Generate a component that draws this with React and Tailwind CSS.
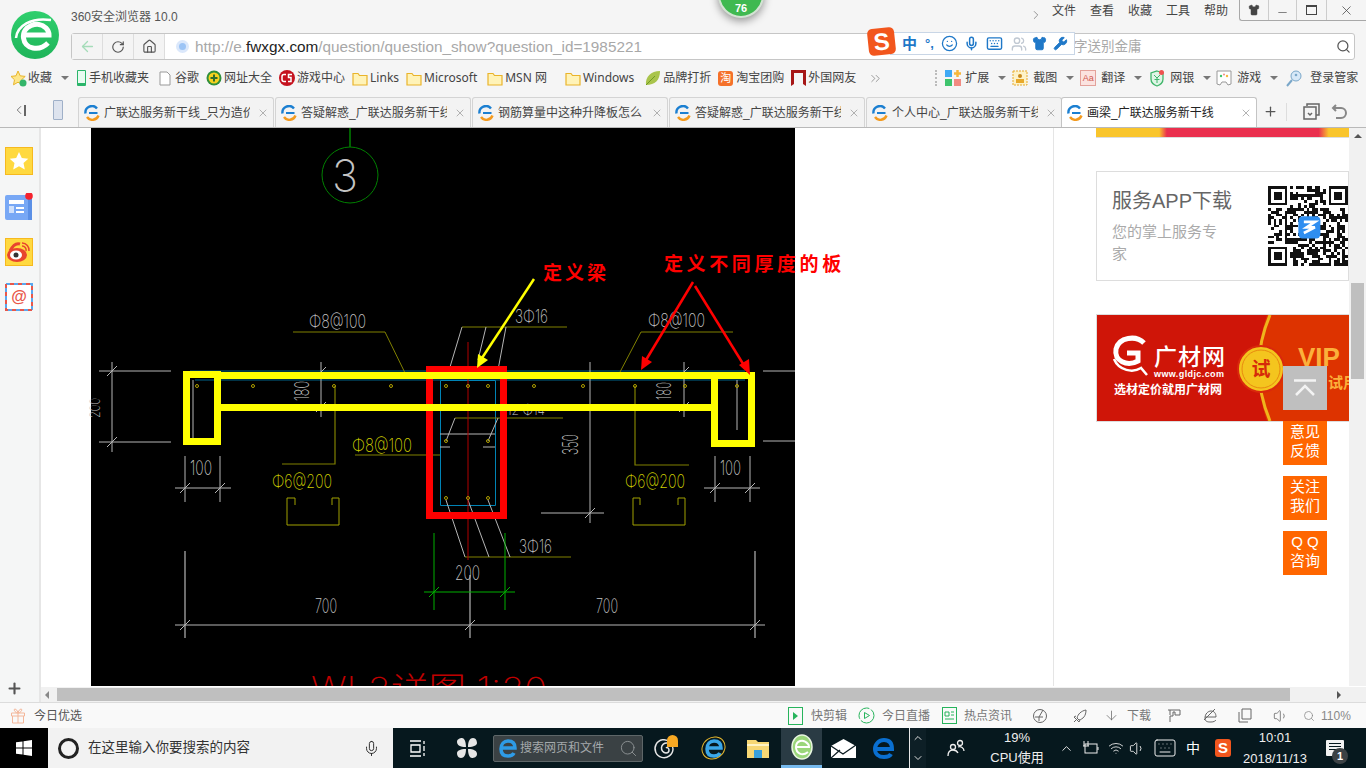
import {
  ArrowLeft, RotateCw, Home, Search, Shirt, Minus, X, ChevronRight, ChevronsRight, Plus, ChevronUp, ChevronDown,
  ArrowDown, Volume1, Wifi, Mic, Keyboard, Smile, Wrench, Users, ChevronLeft,
} from "lucide-react";

const uiFont = "font-['Liberation_Sans','Noto_Sans_CJK_SC',sans-serif]";

const tabs = [
  "广联达服务新干线_只为造价",
  "答疑解惑_广联达服务新干线",
  "钢筋算量中这种升降板怎么",
  "答疑解惑_广联达服务新干线",
  "个人中心_广联达服务新干线",
];

const menus = ["文件", "查看", "收藏", "工具", "帮助"];

function Caret({ className = "" }) {
  return <span className={`w-0 h-0 border-x-[4px] border-x-transparent border-t-[4px] border-t-[#777] ${className}`} />;
}

function FolderIcon() {
  return (
    <svg width="16" height="15" viewBox="0 0 16 15" className="shrink-0">
      <path d="M1 2.5h5l1.5 2H15v9.500H1z" fill="#fff3b8" stroke="#eab42a" strokeWidth="1.200" />
    </svg>
  );
}

function TabFavicon() {
  return (
    <svg width="16" height="16" viewBox="0 0 16 16" className="shrink-0">
      <path d="M1.500 8.500A6.500 6.500 0 0 1 13 3.500" fill="none" stroke="#1b7fd1" strokeWidth="2.400" />
      <path d="M5 8h8.500" stroke="#1b7fd1" strokeWidth="2" />
      <path d="M14.500 10.500A6.500 6.500 0 0 1 3 12" fill="none" stroke="#f39a1e" strokeWidth="2.400" />
    </svg>
  );
}

function Tab({ title, active }) {
  return (
    <div className={`w-[196px] h-[30px] shrink-0 flex items-center pl-[5px] pr-[4px] rounded-t-[3px] border border-b-0 ${active ? "bg-white border-[#c4c4c4]" : "bg-[#f3f3f3] border-[#d4d4d4]"}`}>
      <TabFavicon />
      <span className={`ml-[4px] w-[146px] overflow-hidden whitespace-nowrap text-[12px] ${active ? "text-[#222]" : "text-[#444]"}`}>{title}</span>
      <X size={12} strokeWidth={1.500} className="ml-auto text-[#999]" />
    </div>
  );
}

function Logo360() {
  return (
    <svg width="48" height="48" viewBox="0 0 48 48" className="absolute left-[11px] top-[11px]">
      <defs>
        <linearGradient id="lg360" x1="0" y1="0" x2="0" y2="1">
          <stop offset="0" stopColor="#2fcf6d" />
          <stop offset="1" stopColor="#1fb45a" />
        </linearGradient>
      </defs>
      <circle cx="24" cy="24" r="24" fill="url(#lg360)" />
      <path d="M5 27C6 15 20 6 40 9" fill="none" stroke="#fff" strokeWidth="2.500" />
      <path d="M37 32C28 41 14 38 12.500 27C11 15 27 9 35 17C37 19 38 21 38 24H13" fill="none" stroke="#fff" strokeWidth="5" />
    </svg>
  );
}

function TopBar() {
  return (
    <div className="h-[128px] shrink-0 bg-[#f5f5f5] border-b border-[#b9b9b9] flex flex-col relative">
      <Logo360 />
      <div className="h-[33px] flex">
        <div className="w-[71px] shrink-0" />
        <span className="mt-[10px] text-[12px] leading-[14px] text-[#555]">360安全浏览器 10.0</span>
        <div className="ml-auto flex items-start">
          <ChevronRight size={14} strokeWidth={1.300} className="mt-[8px] mr-[9px] text-[#777]" />
          <div className="flex gap-[14px] mt-[3px] mr-[11px] text-[12px] leading-[16px] text-[#444]">
            {menus.map((m) => <span key={m}>{m}</span>)}
          </div>
          <div className="w-[127px] h-[21px] flex items-center border-l border-b border-[#a8a8a8] rounded-bl-[3px] text-[#444]">
            <div className="w-[29px] flex justify-center border-r border-[#ccc] h-full items-center"><Shirt size={12} fill="#444" strokeWidth={1} /></div>
            <div className="w-[28px] flex justify-center border-r border-[#ccc] h-full items-center"><Minus size={13} strokeWidth={1.200} className="mt-[5px]" /></div>
            <div className="w-[30px] flex justify-center border-r border-[#ccc] h-full items-center">
              <span className="w-[11px] h-[10px] border border-[#444] border-t-[2px]" />
            </div>
            <div className="flex-1 flex justify-center"><X size={15} strokeWidth={1.200} /></div>
          </div>
        </div>
      </div>

      <div className="h-[27px] ml-[71px] mr-[11px] flex items-stretch bg-white border border-[#c6c6c6] rounded-[3px]">
        <div className="w-[31px] flex items-center justify-center bg-[#f4f4f4] border-r border-[#ddd]"><ArrowLeft size={17} strokeWidth={1.800} className="text-[#a5dcb9]" /></div>
        <div className="w-[31px] flex items-center justify-center bg-[#f4f4f4] border-r border-[#ddd]"><RotateCw size={14} strokeWidth={2} className="text-[#555]" /></div>
        <div className="w-[31px] flex items-center justify-center bg-[#f4f4f4] border-r border-[#ddd]"><Home size={15} strokeWidth={1.800} className="text-[#555]" /></div>
        <span className="ml-[11px] mt-[6px] w-[13px] h-[13px] rounded-full bg-[#9cc4f5] border-[3px] border-[#dbe8fb]" />
        <span className="ml-[6px] w-[880px] text-[15.300px] leading-[25px] text-[#a8a8a8] whitespace-nowrap">
          http://e.<span className="text-[#222]">fwxgx.com</span>/question/question_show?question_id=1985221
        </span>
        <span className="ml-[-1px] text-[13.500px] leading-[25px] text-[#aaa] whitespace-nowrap">字送别金庸</span>
        <Search size={15} strokeWidth={2} className="ml-auto mr-[3px] mt-[5px] text-[#555]" />
      </div>

      <div className="h-[37px] flex items-center pb-[1px] pl-[10px] text-[12px] text-[#444] whitespace-nowrap">
        <svg width="17" height="17" viewBox="0 0 17 17">
          <path d="M8 1l2.200 4.800 5 .6-3.700 3.400 1 5-4.500-2.600-4.500 2.600 1-5L1 6.400l5-.6z" fill="#fde68a" stroke="#e9b52a" />
          <circle cx="13" cy="13" r="3.500" fill="#34b56a" />
        </svg>
        <span className="ml-[1px]">收藏</span>
        <Caret className="ml-[9px]" />
        <span className="ml-[8px] w-[9px] h-[16px] border border-[#2ab56a] rounded-[1px] bg-[#e8fbf0] border-b-[3px]" />
        <span className="ml-[3px]">手机收藏夹</span>
        <svg width="12" height="15" viewBox="0 0 12 15" className="ml-[10px]"><path d="M1 1h7l3 3v10H1z" fill="#fff" stroke="#999" /></svg>
        <span className="ml-[4px]">谷歌</span>
        <svg width="16" height="16" viewBox="0 0 16 16" className="ml-[7px]">
          <circle cx="8" cy="8" r="7.500" fill="#2f8f3c" /><circle cx="8" cy="8" r="5.500" fill="#f7d21e" />
          <path d="M8 4.500v7M4.500 8h7" stroke="#2f6f2c" strokeWidth="2" />
        </svg>
        <span className="ml-[2px]">网址大全</span>
        <svg width="16" height="16" viewBox="0 0 16 16" className="ml-[7px]">
          <circle cx="8" cy="8" r="8" fill="#c5121e" />
          <path d="M7 4.500H5A2 2 0 0 0 3 6.500v3a2 2 0 0 0 2 2h2M13 4.500H9.500v3H12v4H9" fill="none" stroke="#fff" strokeWidth="1.500" />
        </svg>
        <span className="ml-[2px]">游戏中心</span>
        <span className="ml-[7px]"><FolderIcon /></span>
        <span className="ml-[2px] font-['Noto_Sans',sans-serif]">Links</span>
        <span className="ml-[7px]"><FolderIcon /></span>
        <span className="ml-[2px] font-['Noto_Sans',sans-serif]">Microsoft</span>
        <span className="ml-[10px]"><FolderIcon /></span>
        <span className="ml-[2px] font-['Noto_Sans','Noto_Sans_CJK_SC',sans-serif]">MSN 网</span>
        <span className="ml-[18px]"><FolderIcon /></span>
        <span className="ml-[2px] font-['Noto_Sans',sans-serif]">Windows</span>
        <svg width="16" height="16" viewBox="0 0 16 16" className="ml-[11px]"><path d="M1 15C0 7 6 1 15 1c0 9-5 14-14 14z" fill="#a9c44c" /><path d="M1 15L10 6" stroke="#6f9a22" /></svg>
        <span className="ml-[2px]">品牌打折</span>
        <span className="ml-[7px] w-[15px] h-[15px] rounded-[3px] bg-[#f5712a] text-white text-[11px] leading-[15px] text-center">淘</span>
        <span className="ml-[3px]">淘宝团购</span>
        <svg width="15" height="16" viewBox="0 0 15 16" className="ml-[7px]"><path d="M0 0h15v16l-3-2V3H3v11l-3 2z" fill="#a61616" /></svg>
        <span className="ml-[2px]">外国网友</span>
        <ChevronsRight size={15} strokeWidth={1} className="ml-[12px] text-[#666]" />
        <span className="ml-[52px] w-[2px] h-[16px] border-l-2 border-dotted border-[#bbb]" />
        <svg width="16" height="16" viewBox="0 0 16 16" className="ml-[8px]">
          <rect x="0" y="0" width="7" height="7" fill="#3fa9f5" /><rect x="0" y="9" width="7" height="7" fill="#3ec46d" />
          <rect x="9" y="9" width="7" height="7" fill="#f28b82" /><path d="M12.500 0v7M9 3.500h7" stroke="#f6b73c" strokeWidth="2.500" />
        </svg>
        <span className="ml-[4px]">扩展</span>
        <Caret className="ml-[9px]" />
        <svg width="16" height="16" viewBox="0 0 16 16" className="ml-[6px]">
          <rect x="1" y="1" width="14" height="14" fill="#fdf2c8" stroke="#e8a92a" strokeDasharray="2 1" />
          <circle cx="8" cy="6" r="2" fill="#c98a1d" /><rect x="4" y="9" width="8" height="4" fill="#e8a92a" />
        </svg>
        <span className="ml-[5px]">截图</span>
        <Caret className="ml-[9px]" />
        <span className="ml-[6px] w-[16px] h-[16px] bg-[#fbe3e0] border border-[#e3a29b] text-[#d05a50] text-[9px] leading-[14px] text-center">Aa</span>
        <span className="ml-[5px]">翻译</span>
        <Caret className="ml-[9px]" />
        <svg width="16" height="18" viewBox="0 0 16 18" className="ml-[7px]">
          <path d="M8 2l6 2v6c0 4-3 6-6 7-3-1-6-3-6-7V4z" fill="#dff5e6" stroke="#3fb56a" strokeWidth="1.300" />
          <path d="M5 6l3 3 3-3M8 9v5M5.500 10.500h5" stroke="#3fb56a" fill="none" />
          <circle cx="12.500" cy="3.500" r="2.500" fill="#ef5350" />
        </svg>
        <span className="ml-[5px]">网银</span>
        <Caret className="ml-[9px]" />
        <svg width="16" height="16" viewBox="0 0 16 16" className="ml-[5px]">
          <path d="M1 1h14v13l-3 1-2-3H6l-2 3-3-1z" fill="#fff" stroke="#999" />
          <circle cx="5" cy="6" r="1.200" fill="#3ec46d" /><circle cx="8" cy="4.500" r="1" fill="#f28b82" /><circle cx="11" cy="6" r="1.200" fill="#f6b73c" />
        </svg>
        <span className="ml-[5px]">游戏</span>
        <Caret className="ml-[9px]" />
        <svg width="16" height="17" viewBox="0 0 16 17" className="ml-[8px]">
          <circle cx="10" cy="6" r="5" fill="#d7e8f7" stroke="#7aa7c9" /><circle cx="10" cy="5" r="1.300" fill="#7aa7c9" />
          <path d="M6 10l-5 6" stroke="#7aa7c9" strokeWidth="2" />
        </svg>
        <span className="ml-[8px]">登录管家</span>
      </div>

      <div className="h-[30px] flex items-end text-[#666]">
        <div className="w-[41px] h-[30px] flex items-center pl-[12px] pb-[4px]">
          <ChevronLeft size={14} strokeWidth={1.500} />
          <span className="w-[2px] h-[11px] bg-[#666] -ml-[2px]" />
        </div>
        <div className="w-[37px] h-[30px] flex items-center">
          <span className="ml-[12px] w-[10px] h-[20px] bg-[#dde3ee] border border-[#9fb0c8] rounded-[1px] mb-[4px]" />
        </div>
        <div className="flex gap-[1px]">
          {tabs.map((t, i) => <Tab key={i} title={t} />)}
          <div className="-ml-[2px]"><Tab title="画梁_广联达服务新干线" active /></div>
        </div>
        <Plus size={15} strokeWidth={2} className="ml-[6px] mb-[8px] text-[#555]" />
        <span className="ml-[8px] mb-[6px] w-[1px] h-[18px] bg-[#ddd]" />
        <svg width="18" height="17" viewBox="0 0 18 17" className="ml-[16px] mb-[7px]" fill="none" stroke="#666" strokeWidth="1.500">
          <path d="M4 3V1h12v11h-3M1 4h12v12H1z" />
          <path d="M5 10l2 2 2-2" />
        </svg>
        <svg width="16" height="16" viewBox="0 0 16 16" className="ml-[10px] mb-[7px]" fill="none" stroke="#888" strokeWidth="2">
          <path d="M2 4h8a5 5 0 0 1 0 10H5M5 1L2 4l3 3" />
        </svg>
      </div>

      {/* update badge */}
      <div className="absolute left-[718px] top-[-28px] w-[46px] h-[46px] rounded-full bg-[#3fb950] border-2 border-[#d3e3d3] shadow-[0_3px_8px_rgba(0,0,0,0.4)] flex items-end justify-center">
        <span className="text-[11px] leading-[16px] font-bold text-white">76</span>
      </div>

      {/* input method toolbar */}
      <div className="absolute left-[890px] top-[32px] w-[185px] h-[23px] bg-white border border-[#c9d6e6] flex items-center text-[#1f78c8]">
        <span className="ml-[11px] text-[15px] leading-none font-bold">中</span>
        <span className="ml-[8px] text-[13px] leading-none font-bold">°,</span>
        <Smile size={17} strokeWidth={1.800} className="ml-[7px]" />
        <Mic size={15} strokeWidth={2.400} className="ml-[6px]" />
        <Keyboard size={17} strokeWidth={2} className="ml-[7px]" />
        <Users size={16} strokeWidth={2} className="ml-[8px] text-[#c0c8d2]" />
        <Shirt size={15} fill="#1f78c8" strokeWidth={1.500} className="ml-[5px]" />
        <Wrench size={15} fill="#1f78c8" strokeWidth={1.500} className="ml-[6px]" />
      </div>
      <div className="absolute left-[868px] top-[28px] w-[27px] h-[27px] rounded-[5px] bg-[#f2561d] rotate-[-6deg] flex items-center justify-center">
        <span className="text-white text-[24px] leading-none font-bold font-['Liberation_Sans',sans-serif]">S</span>
      </div>
    </div>
  );
}

function Sidebar() {
  return (
    <div className="w-[41px] shrink-0 h-full bg-[#f5f6f6] border-r-2 border-[#e6e6e6] flex flex-col items-start pl-[5px]">
      <div className="mt-[19px] w-[28px] h-[28px] bg-[#ffd940] border border-[#f6b91f] flex items-center justify-center">
        <svg width="20" height="20" viewBox="0 0 20 20"><path d="M10 1l2.800 6 6.500.7-4.800 4.400 1.300 6.400L10 15.300 4.200 18.500l1.300-6.400L.7 7.700 7.200 7z" fill="#fff" /></svg>
      </div>
      <svg width="28" height="27" viewBox="0 0 28 27" className="mt-[18px]">
        <rect x="0" y="2" width="27" height="25" rx="2" fill="#78a8f5" />
        <rect x="23" y="5" width="4" height="22" fill="#5b90e6" />
        <rect x="4" y="7" width="15" height="4" fill="#fff" /><rect x="4" y="13" width="5" height="7" fill="#cfe0fb" />
        <rect x="11" y="14" width="8" height="2" fill="#fff" /><rect x="11" y="18" width="8" height="2" fill="#fff" />
        <circle cx="24" cy="3" r="3.800" fill="#f5222d" />
      </svg>
      <div className="mt-[18px] w-[28px] h-[28px] bg-[#ffd940] border border-[#f6b91f] flex items-center justify-center">
        <svg width="24" height="22" viewBox="0 0 24 22">
          <ellipse cx="10" cy="14" rx="10" ry="7" fill="#e8442e" />
          <path d="M3 10c3-6 7-8 10-7" stroke="#e8442e" strokeWidth="3" fill="none" />
          <ellipse cx="9" cy="14" rx="6" ry="4.500" fill="#fff" /><circle cx="9" cy="14" r="2.500" fill="#333" />
          <path d="M15 2a7 7 0 0 1 7 8M15 5a4 4 0 0 1 4 5" stroke="#e8442e" strokeWidth="1.500" fill="none" />
        </svg>
      </div>
      <div className="mt-[17px] w-[28px] h-[28px] relative flex items-center justify-center text-[16px] font-bold text-[#e8574a] leading-none font-['Liberation_Sans',sans-serif]">
        <svg width="28" height="28" viewBox="0 0 28 28" className="absolute inset-0">
          <rect x="1" y="1" width="26" height="26" fill="#fff" stroke="#5aa7ee" strokeWidth="2" strokeDasharray="4 4" />
          <rect x="1" y="1" width="26" height="26" fill="none" stroke="#e8574a" strokeWidth="2" strokeDasharray="4 4" strokeDashoffset="4" />
        </svg>
        <span className="relative">@</span>
      </div>
      <Plus size={17} strokeWidth={3} className="mt-auto mb-[5px] ml-[1px] text-[#555]" />
    </div>
  );
}

function CadText({ x, y, w, size = 20, fill = "#c4c4c4", rotate, children }) {
  return (
    <text
      x={x}
      y={y}
      fontSize={size}
      fontWeight="200"
      fill={fill}
      textLength={w}
      lengthAdjust="spacingAndGlyphs"
      fontFamily="Inter, Roboto, Noto Sans CJK SC, sans-serif"
      transform={rotate ? `rotate(-90 ${x} ${y})` : undefined}
    >
      {children}
    </text>
  );
}

const rebarDots = [
  [197, 386], [253, 386], [334, 386], [391, 386], [446, 386], [468, 386], [488, 386], [534, 386], [583, 386], [635, 386], [685, 386], [737, 386],
  [446, 441], [488, 441], [446, 498], [468, 498], [488, 498],
];

const ticks = [
  [185, 488], [220, 488], [715, 488], [750, 488], [185, 625], [470, 625], [755, 625], [112, 371], [112, 442], [321, 372], [321, 407], [684, 372], [684, 407], [590, 513],
];

// section drawing, in page coordinates
function CadDrawing() {
  const gray = "#b5b5b5";
  const olive = "#808000";
  return (
    <svg width="704" height="558" viewBox="91 128 704 558" className="block shrink-0 bg-black overflow-visible">
      <path d="M350 128v19" stroke="#008000" strokeWidth="1.500" />
      <circle cx="350" cy="175" r="28" fill="none" stroke="#008000" />
      <CadText x={332} y={192} w={26} size={45}>3</CadText>

      {/* slab + column outlines */}
      <path d="M190 371H745M195 380H745" stroke="#00648c" />
      <path d="M440.500 380.500H495.500V505.500H440.500Z" fill="none" stroke="#0083b5" />
      <path d="M193 380v60M737 380v50" stroke={gray} />

      {/* leaders */}
      <path d="M293 332H385L408 379M733 332H641L620 372M462 327H567M465 557H571M355 455H440M455 418H563" stroke={olive} fill="none" />
      <path d="M335 386V464H282M635 386V465H689" stroke={olive} fill="none" strokeWidth="1.200" />
      <path d="M295 505V498H287V525H339V498H332V505M640 505V498H633V525H685V498H678V505" stroke="#a0a000" fill="none" />
      <path d="M462 327L450 367M486 327L478 360M506 327L498 370M455 418L446 441M498 418L488 441M446 500L465 557M468 500L489 557M488 500L510 557" stroke={gray} fill="none" />
      <path d="M440 434H495M440 447H450M483 447H495" stroke={gray} />
      <path d="M468 342V560" stroke="#b00000" />

      {/* dimensions */}
      <path d="M99 371H171M99 442H171M112 362V452M321 362V417M684 362V417M590 362V523M541 513H604" stroke={gray} />
      <path d="M185 456V502M220 456V502M175 488H231M715 456V502M750 456V502M704 488H760M763 371H795M763 441H795" stroke={gray} />
      <path d="M185 551V638M755 551V638M470 575V638M175 625H765" stroke={gray} strokeWidth="1.200" />
      {ticks.map(([x, y]) => <path key={`${x}-${y}`} d={`M${x - 5} ${y + 5}L${x + 5} ${y - 5}`} stroke={gray} />)}
      <path d="M434 533V610M505 533V610M424 592H515M429 597L439 587M500 597L510 587" stroke="#00b000" />

      {rebarDots.map(([x, y]) => <circle key={`${x}-${y}`} cx={x} cy={y} r="1.500" fill="none" stroke="#b0a000" />)}

      <CadText x={309} y={328} w={57} size={19} >Φ8@100</CadText>
      <CadText x={648} y={327} w={57} size={19} >Φ8@100</CadText>
      <CadText x={515} y={323} w={33} size={19} >3Φ16</CadText>
      <CadText x={519} y={553} w={33} size={19} >3Φ16</CadText>
      <CadText x={507} y={415} w={38} size={15} >12 Φ14</CadText>
      <CadText x={352} y={452} w={60} size={19} fill="#d0d000">Φ8@100</CadText>
      <CadText x={272} y={488} w={60} size={19} fill="#d0d000">Φ6@200</CadText>
      <CadText x={625} y={488} w={60} size={19} fill="#d0d000">Φ6@200</CadText>
      <CadText x={190} y={475} w={22} size={20}>100</CadText>
      <CadText x={720} y={475} w={21} size={20}>100</CadText>
      <CadText x={455} y={580} w={25} size={20}>200</CadText>
      <CadText x={315} y={613} w={22} size={20}>700</CadText>
      <CadText x={596} y={613} w={22} size={20}>700</CadText>
      <CadText x={309} y={401} w={20} size={20} rotate>180</CadText>
      <CadText x={671} y={400} w={18} size={20} rotate>180</CadText>
      <CadText x={578} y={455} w={21} size={22} rotate>350</CadText>
      <CadText x={100} y={418} w={20} size={14} rotate>200</CadText>
      <CadText x={311} y={700} w={236} size={32} fill="#c00000">WL2详图 1:20</CadText>

      {/* hand annotations */}
      <path d="M429.500 369.500H503.500V515.500H429.500Z" fill="none" stroke="#ff0000" strokeWidth="7" />
      <path d="M186.500 374.500H217.500V441.500H186.500Z" fill="none" stroke="#ffff00" strokeWidth="7" />
      <path d="M714.500 375.500H751.500V443.500H714.500Z" fill="none" stroke="#ffff00" strokeWidth="7" />
      <path d="M221 375.500H711M221 407.500H711" stroke="#ffff00" strokeWidth="7" />

      <path d="M534 279L482 358" stroke="#ffff00" strokeWidth="2.500" />
      <path d="M477 368L478 354L488 360Z" fill="#ffff00" />
      <path d="M693 282L646 360" stroke="#ff0000" strokeWidth="2.500" />
      <path d="M641 370L642 356L652 362Z" fill="#ff0000" />
      <path d="M695 286L745 367" stroke="#ff0000" strokeWidth="2.500" />
      <path d="M750 375L739 365L749 359Z" fill="#ff0000" />

      <text x="543" y="280" fontSize="19" fontWeight="700" letterSpacing="3" fill="#ff0000" fontFamily="Noto Sans CJK SC, sans-serif">定义梁</text>
      <text x="664" y="271" fontSize="19" fontWeight="700" letterSpacing="3.600" fill="#ff0000" fontFamily="Noto Sans CJK SC, sans-serif">定义不同厚度的板</text>
    </svg>
  );
}

// qr matrix, seeded so it stays the same on every render
const qrCells = (() => {
  const size = 29;
  const cells = [];
  let seed = 7919;
  const inFinder = (x, y) => (x < 8 && y < 8) || (x >= size - 8 && y < 8) || (x < 8 && y >= size - 8);
  for (let y = 0; y < size; y++) {
    for (let x = 0; x < size; x++) {
      seed = (seed * 1103515245 + 12345) & 0x7fffffff;
      if (!inFinder(x, y) && (seed >> 16) % 100 < 52) cells.push([x, y]);
    }
  }
  return cells;
})();

function QrCode() {
  const finders = [[0, 0], [22, 0], [0, 22]];
  return (
    <svg width="80" height="80" viewBox="0 0 29 29" shapeRendering="crispEdges" className="shrink-0">
      {qrCells.map(([x, y]) => <rect key={`${x}-${y}`} x={x} y={y} width="1" height="1" fill="#111" />)}
      {finders.map(([x, y]) => (
        <g key={`${x}-${y}`}>
          <rect x={x} y={y} width="7" height="7" fill="#111" />
          <rect x={x + 1} y={y + 1} width="5" height="5" fill="#fff" />
          <rect x={x + 2} y={y + 2} width="3" height="3" fill="#111" />
        </g>
      ))}
      <rect x="11" y="11" width="8" height="8" rx="1.500" fill="#2f8ef0" shapeRendering="auto" />
      <path d="M13 13h4l-3 2h3l-4 2" stroke="#fff" strokeWidth="1" fill="none" shapeRendering="auto" />
    </svg>
  );
}

function GldjcBanner() {
  return (
    <svg width="253" height="106" viewBox="0 0 253 106" className="block">
      <rect width="253" height="106" fill="#cf1508" />
      <path d="M170 0H253V106H170C158 70 158 35 170 0Z" fill="#dd3300" />
      <path d="M173 0C158 35 158 70 173 106" fill="none" stroke="#efb51c" strokeWidth="3" />
      <circle cx="164" cy="54" r="23" fill="#f4c51e" stroke="#d9290c" strokeWidth="2" />
      <circle cx="164" cy="54" r="19" fill="none" stroke="#e98a0f" />
      <text x="164" y="61" textAnchor="middle" fontSize="19" fontWeight="700" fill="#d62a0a" fontFamily="Noto Sans CJK SC, sans-serif">试</text>
      <path d="M47 28C39 20 22 22 19 34C17 46 30 52 41 46V38H30" fill="none" stroke="#fff" strokeWidth="5" />
      <path d="M17 44C22 56 36 58 44 53L50 60" fill="none" stroke="#fff" strokeWidth="2.500" />
      <text x="57" y="50" fontSize="23" fontWeight="500" letterSpacing="1" fill="#fff" fontFamily="Noto Sans CJK SC, sans-serif">广材网</text>
      <text x="57" y="62" fontSize="9" fontWeight="700" fill="#fff" fontFamily="Liberation Sans, sans-serif" letterSpacing="0.400">www.gldjc.com</text>
      <text x="17" y="79" fontSize="12" fontWeight="700" fill="#fff" fontFamily="Noto Sans CJK SC, sans-serif">选材定价就用广材网</text>
      <text x="201" y="51" fontSize="26" fontWeight="700" fill="#fbb03b" fontFamily="Liberation Sans, sans-serif">VIP</text>
      <text x="231" y="73" fontSize="15" fontWeight="700" fill="#fbb03b" fontFamily="Noto Sans CJK SC, sans-serif">试用</text>
    </svg>
  );
}

function RightColumn() {
  return (
    <div className="w-[295px] shrink-0 h-full overflow-hidden pl-[42px]">
      <div className="w-[253px] h-[10px] border-b border-[#ddd] bg-[linear-gradient(90deg,#f9c52c_0%,#f9c52c_25%,#ea2f4e_28%,#ea2f4e_88%,#f9c52c_92%)]" />
      <div className="mt-[33px] w-[253px] h-[110px] border border-[#ddd] flex">
        <div className="w-[172px] pl-[15px] pt-[16px]">
          <div className="text-[20px] leading-[26px] text-[#666]">服务APP下载</div>
          <div className="mt-[7px] w-[112px] text-[15px] leading-[22px] text-[#aaa]">您的掌上服务专家</div>
        </div>
        <div className="mt-[14px]"><QrCode /></div>
      </div>
      <div className="mt-[33px] w-[253px] border border-[#ddd]"><GldjcBanner /></div>
    </div>
  );
}

function FloatWidgets() {
  const btn = "w-[44px] h-[44px] pb-[4px] bg-[#ff6600] text-white text-[15px] leading-[19px] flex flex-col items-center justify-center";
  return (
    <div className="absolute left-[1242px] top-[238px] w-[44px] flex flex-col gap-[11px]">
      <div className="w-[44px] h-[44px] bg-[#bfbfbf] flex items-center justify-center">
        <svg width="24" height="18" viewBox="0 0 24 18" fill="none" stroke="#f3f3f3" strokeWidth="2.500">
          <path d="M1 1.500h22M3 16L12 7l9 9" />
        </svg>
      </div>
      <div className={btn}><span>意见</span><span>反馈</span></div>
      <div className={btn}><span>关注</span><span>我们</span></div>
      <div className={btn}><span className="tracking-[4px] pl-[4px]">QQ</span><span>咨询</span></div>
    </div>
  );
}

function Main() {
  return (
    <div className="h-[574px] shrink-0 flex">
      <Sidebar />
      <div className="flex-1 min-w-0 flex flex-col bg-white">
        <div className="h-[558px] flex relative">
          <div className="w-[1013px] shrink-0 pl-[50px] h-full overflow-hidden border-r border-[#e5e5e5]">
            <CadDrawing />
          </div>
          <RightColumn />
          <div className="w-[17px] shrink-0 h-full bg-[#f1f1f1] flex flex-col items-center">
            <span className="mt-[6px] w-0 h-0 border-x-[4px] border-x-transparent border-b-[4px] border-b-[#555]" />
            <span className="mt-[145px] w-[13px] h-[96px] bg-[#bfbfbf]" />
          </div>
          <FloatWidgets />
        </div>
        <div className="h-[16px] mt-[1px] bg-[#f1f1f1] flex items-center">
          <span className="ml-[4px] w-0 h-0 border-y-[4px] border-y-transparent border-r-[4px] border-r-[#888]" />
          <span className="ml-[8px] w-[1233px] h-[13px] bg-[#bfbfbf]" />
          <span className="ml-[47px] w-0 h-0 border-y-[4px] border-y-transparent border-l-[4px] border-l-[#555]" />
        </div>
      </div>
    </div>
  );
}

function StatusBar() {
  return (
    <div className="h-[26px] shrink-0 bg-[#f9f9f9] border-t border-[#dcdcdc] flex items-center text-[12px] text-[#777] whitespace-nowrap">
      <svg width="16" height="16" viewBox="0 0 16 16" className="ml-[10px]" fill="none" stroke="#f4b79a">
        <path d="M1.500 5h13v3h-13zM2.500 8v7h11V8M8 5v10M8 5C5 5 3 1 5 1s3 4 3 4 1-4 3-4 0 4-3 4" />
      </svg>
      <span className="ml-[8px] text-[#555]">今日优选</span>

      <svg width="15" height="18" viewBox="0 0 15 18" className="ml-[706px]" fill="none"><rect x=".5" y=".5" width="14" height="17" stroke="#27b45c" /><path d="M5 5l5 4-5 4z" fill="#27b45c" /></svg>
      <span className="ml-[8px]">快剪辑</span>
      <svg width="17" height="17" viewBox="0 0 17 17" className="ml-[11px]" fill="none"><circle cx="8.500" cy="8.500" r="7.500" stroke="#27b45c" strokeDasharray="18 2" /><path d="M6.500 5.500l5 3-5 3z" stroke="#27b45c" /></svg>
      <span className="ml-[7px]">今日直播</span>
      <svg width="15" height="17" viewBox="0 0 15 17" className="ml-[12px]" fill="none" stroke="#27b45c"><rect x=".5" y=".5" width="14" height="16" /><path d="M3 5h4v4H3zM9 5h3M9 8h3M3 12h9" /></svg>
      <span className="ml-[7px]">热点资讯</span>
      <svg width="16" height="16" viewBox="0 0 16 16" className="ml-[20px]" fill="none" stroke="#666"><circle cx="8" cy="8" r="6.500" /><path d="M3 9h8M11 2L7 9v4" /></svg>
      <svg width="16" height="16" viewBox="0 0 16 16" className="ml-[24px]" fill="none" stroke="#666"><path d="M14 2C9 3 6 6 5 10l2 2c4-1 7-4 7-10zM4 8L2 9l2 2M8 12l-1 2-2-2M2 14l3-3" /></svg>
      <ArrowDown size={15} strokeWidth={1.200} className="ml-[16px] text-[#666]" />
      <span className="ml-[8px]">下载</span>
      <svg width="14" height="13" viewBox="0 0 14 13" className="ml-[16px]" fill="none" stroke="#666"><path d="M1 1h12v5H8V3H6v4H3v6M3 1v5" /></svg>
      <svg width="16" height="16" viewBox="0 0 16 16" className="ml-[21px]" fill="none" stroke="#666"><path d="M3 9h11c0-4-2-6-5-6S3 6 3 10s3 4 6 4 4-1 5-2M13 1L2 12" /></svg>
      <svg width="14" height="15" viewBox="0 0 14 15" className="ml-[20px]" fill="none" stroke="#666"><path d="M4 11V1h9v10zM1 4v10h9" /></svg>
      <Volume1 size={16} strokeWidth={1.200} className="ml-[21px] text-[#666]" />
      <Search size={12} strokeWidth={1.500} className="ml-[14px] text-[#888]" />
      <span className="ml-[6px] text-[#888]">110%</span>
    </div>
  );
}

function Taskbar() {
  const ieLogo = (cls, stroke = "#2e9be6") => (
    <svg width="24" height="24" viewBox="0 0 24 24" className={cls} fill="none">
      <path d="M5 12h14c0-5-3-7-7-7s-7 3-7 8 3 7 7 7c3 0 5-1 6-3" stroke={stroke} strokeWidth="3.500" />
    </svg>
  );
  return (
    <div className="h-[40px] shrink-0 bg-[#06181e] flex items-center text-white whitespace-nowrap">
      <div className="w-[48px] h-full bg-black flex items-center justify-center">
        <svg width="16" height="16" viewBox="0 0 16 16" fill="#fff"><path d="M0 2.300L6.500 1.400V7.500H0zM7.500 1.200L16 0V7.500H7.500zM0 8.500H6.500V14.600L0 13.700zM7.500 8.500H16V16L7.500 14.800z" /></svg>
      </div>
      <div className="w-[345px] h-full bg-[#f2f2f2] flex items-center text-[#333]">
        <span className="ml-[10px] w-[21px] h-[21px] rounded-full border-[3px] border-[#222]" />
        <span className="ml-[9px] text-[13.500px]">在这里输入你要搜索的内容</span>
        <Mic size={17} strokeWidth={1.300} className="ml-auto mr-[13px] text-[#222]" />
      </div>
      <svg width="16" height="17" viewBox="0 0 16 17" className="ml-[17px]" fill="none" stroke="#fff" strokeWidth="1.300">
        <path d="M0 1h11M0 16h11M1 5h9v7H1zM14 1v3M14 6v5M14 13v3" />
      </svg>
      <svg width="22" height="22" viewBox="0 0 22 22" className="ml-[30px]" fill="#e6e6e6">
        <path d="M10 10C4 10 1 8 1 5s3-4 5-4 4 3 4 9zM12 10c0-6 2-9 5-9s4 3 4 5-3 4-9 4zM12 12c6 0 9 2 9 5s-3 4-5 4-4-3-4-9zM10 12c0 6-2 9-5 9s-4-3-4-5 3-4 9-4z" />
      </svg>
      <div className="ml-[15px] w-[150px] h-[27px] bg-[#3a4144] border border-[#5e6668] rounded-[2px] flex items-center text-[12px] text-[#a5a9ab]">
        {ieLogo("ml-[2px] -mr-[2px]")}
        <span className="ml-[2px]">搜索网页和文件</span>
        <Search size={19} strokeWidth={1.200} className="ml-auto mr-[4px] text-[#8c9193]" />
      </div>
      <div className="ml-[10px] w-[24px] h-[24px] relative">
        <svg width="22" height="22" viewBox="0 0 22 22" fill="none" stroke="#e6e6e6" strokeWidth="1.500" className="mt-[2px]">
          <path d="M17 4a9 9 0 1 0 3 7c0-4-3-6-6-6a5 5 0 0 0-1 10c2 0 3-1 3-3s-2-3-3-2" />
        </svg>
        <span className="absolute left-[14px] -top-[1px] w-[11px] h-[12px] rounded-t-full bg-[#f7a823]" />
      </div>
      <div className="ml-[24px] w-[26px] h-[26px] relative">
        {ieLogo("absolute left-[1px] top-[1px]", "#3aa7e8")}
        <span className="absolute left-0 top-[2px] w-[25px] h-[22px] rounded-[50%] border border-[#e8b92e] rotate-[-35deg]" />
      </div>
      <svg width="24" height="22" viewBox="0 0 24 22" className="ml-[19px]"><path d="M1 3h9l2 2h11v16H1z" fill="#f7d774" /><rect x="8" y="13" width="8" height="8" fill="#3aa0dc" /><rect x="1" y="7" width="22" height="2" fill="#fff3c4" /></svg>
      <div className="ml-[11px] w-[41px] h-full bg-[#2a3b44] border-b-[3px] border-[#76b9ed] flex items-center justify-center">
        <svg width="24" height="28" viewBox="0 0 24 28" fill="none">
          <ellipse cx="12" cy="14" rx="10" ry="12" fill="#9ad67a" stroke="#e8f5e0" strokeWidth="1.500" />
          <path d="M18 19C12 24 6 20 6 14S13 5 18 11c1 1 1 2 1 3H6" stroke="#fff" strokeWidth="2" />
        </svg>
      </div>
      <svg width="25" height="19" viewBox="0 0 25 19" className="ml-[9px]"><path d="M0 7L12.500 0 25 7v12H0z" fill="#fff" /><path d="M0 7l12 8L25 6M0 19l9-8" stroke="#0a1a20" strokeWidth="1.300" fill="none" /></svg>
      <svg width="24" height="24" viewBox="0 0 24 24" className="ml-[16px]" fill="none"><path d="M4 13h16c0-6-3-9-8-9S3 8 3 13s4 8 9 8c3 0 6-1 7-3" stroke="#0a6fd0" strokeWidth="4" /></svg>
      <div className="ml-[13px] w-[17px] h-full bg-[#0d1f26] border-l border-[#e8e8e8] flex flex-col items-center justify-center gap-[8px] text-[#ddd]">
        <ChevronUp size={12} strokeWidth={2} />
        <ChevronDown size={12} strokeWidth={2} />
      </div>
      <svg width="18" height="18" viewBox="0 0 18 18" className="ml-[21px]" fill="none" stroke="#eee" strokeWidth="1.300"><circle cx="6" cy="8" r="2.500" /><circle cx="13" cy="4" r="2.500" /><path d="M1 17c0-4 2-6 5-6s4 1 5 3M11 8c3-1 6 1 6 4" /></svg>
      <div className="ml-[17px] w-[70px] text-center text-[13px] leading-[20px] text-[#eee]">
        <div>19%</div>
        <div>CPU使用</div>
      </div>
      <ChevronUp size={15} strokeWidth={1.500} className="ml-[7px] text-[#eee]" />
      <svg width="17" height="14" viewBox="0 0 17 14" className="ml-[8px]" fill="none" stroke="#eee"><rect x="3" y="3" width="12" height="9" /><path d="M2 0v5M6 0v5M16 6v3M1 5h6" /></svg>
      <Wifi size={16} strokeWidth={1.300} className="ml-[9px] text-[#eee]" />
      <Volume1 size={17} strokeWidth={1.300} className="ml-[5px] text-[#eee]" />
      <Keyboard size={24} strokeWidth={1} className="ml-[7px] text-[#eee]" />
      <span className="ml-[9px] text-[14px]">中</span>
      <span className="ml-[15px] w-[16px] h-[18px] rounded-[3px] bg-[#f2561d] text-[15px] leading-[18px] font-bold text-center font-['Liberation_Sans',sans-serif]">S</span>
      <div className="ml-[6px] w-[76px] text-center text-[13px] leading-[21px] text-[#eee]">
        <div>10:01</div>
        <div>2018/11/13</div>
      </div>
      <div className="ml-[13px] relative w-[18px] h-[16px] bg-[#f2f2f2] rounded-[1px]">
        <span className="absolute left-[3px] top-[3px] w-[12px] h-[1px] bg-[#06181e]" />
        <span className="absolute left-[3px] top-[6px] w-[12px] h-[1px] bg-[#06181e]" />
        <span className="absolute left-[3px] top-[9px] w-[12px] h-[1px] bg-[#06181e]" />
        <span className="absolute left-[6px] top-[8px] w-[16px] h-[16px] rounded-full bg-[#3c4245] text-[11px] leading-[16px] font-bold text-center text-white">1</span>
      </div>
    </div>
  );
}

export default function App() {
  return (
    <div className={`w-[1366px] h-[768px] overflow-hidden flex flex-col bg-white ${uiFont}`}>
      <TopBar />
      <Main />
      <StatusBar />
      <Taskbar />
    </div>
  );
}
